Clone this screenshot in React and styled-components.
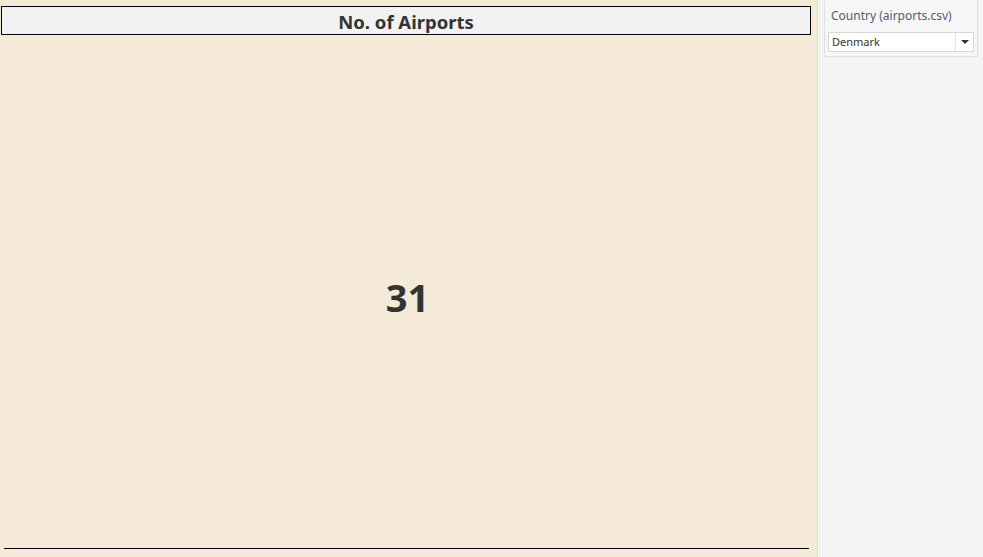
import React from 'react';
import styled, { createGlobalStyle } from 'styled-components';

const GlobalStyle = createGlobalStyle`
  html, body {
    margin: 0;
    padding: 0;
    height: 100%;
  }
  #root {
    height: 100%;
  }
  body {
    font-family: "Noto Sans", "Open Sans", sans-serif;
    overflow: hidden;
  }
`;

const Dashboard = styled.div`
  display: flex;
  width: 983px;
  height: 557px;
`;

const Canvas = styled.main`
  width: 817px;
  display: flex;
  flex-direction: column;
  background: #f5e9d8;
  border-right: 1px solid #dcdad6;
`;

const TitleBox = styled.h1`
  margin: 6px 0 0 1px;
  width: 808px;
  height: 27px;
  padding-top: 2px;
  box-sizing: content-box;
  height: 25px;
  border: 1px solid #000;
  background: #f2f2f2;
  display: flex;
  align-items: center;
  justify-content: center;
  font-size: 18.5px;
  font-weight: 700;
  color: #333;
`;

const Kpi = styled.div`
  flex: 1;
  display: flex;
  align-items: center;
  justify-content: center;
  padding-top: 10px;
  padding-right: 2px;
  font-size: 38px;
  font-weight: 700;
  color: #333;
`;

const Rule = styled.hr`
  margin: 0 8px 8px 4px;
  border: none;
  height: 1px;
  background: #000;
`;

const Sidebar = styled.aside`
  flex: 1;
  background: #f4f4f4;
  padding: 0 5px 0 6px;
`;

const FilterCard = styled.section`
  border: 1px solid #e0e0e0;
  border-top: none;
  background: #f6f6f6;
  padding: 7px 3px 4px 3px;
`;

const FilterLabel = styled.div`
  font-size: 12px;
  color: #555d69;
  padding-left: 3px;
  height: 18px;
  line-height: 18px;
  margin-bottom: 7px;
`;

const Select = styled.div`
  display: flex;
  height: 18px;
  border: 1px solid #d6d6d6;
  background: #fff;
  font-size: 11px;
  color: #333;
`;

const SelectValue = styled.span`
  flex: 1;
  padding-left: 3px;
  line-height: 18px;
`;

const SelectArrow = styled.span`
  width: 17px;
  border-left: 1px solid #e2e2e2;
  display: flex;
  align-items: center;
  justify-content: center;

  &::after {
    content: '';
    border-left: 4px solid transparent;
    border-right: 4px solid transparent;
    border-top: 4px solid #333;
  }
`;

export default function App() {
  return (
    <>
      <GlobalStyle />
      <Dashboard>
        <Canvas>
          <TitleBox>No. of Airports</TitleBox>
          <Kpi>31</Kpi>
          <Rule />
        </Canvas>
        <Sidebar>
          <FilterCard>
            <FilterLabel>Country (airports.csv)</FilterLabel>
            <Select>
              <SelectValue>Denmark</SelectValue>
              <SelectArrow />
            </Select>
          </FilterCard>
        </Sidebar>
      </Dashboard>
    </>
  );
}
